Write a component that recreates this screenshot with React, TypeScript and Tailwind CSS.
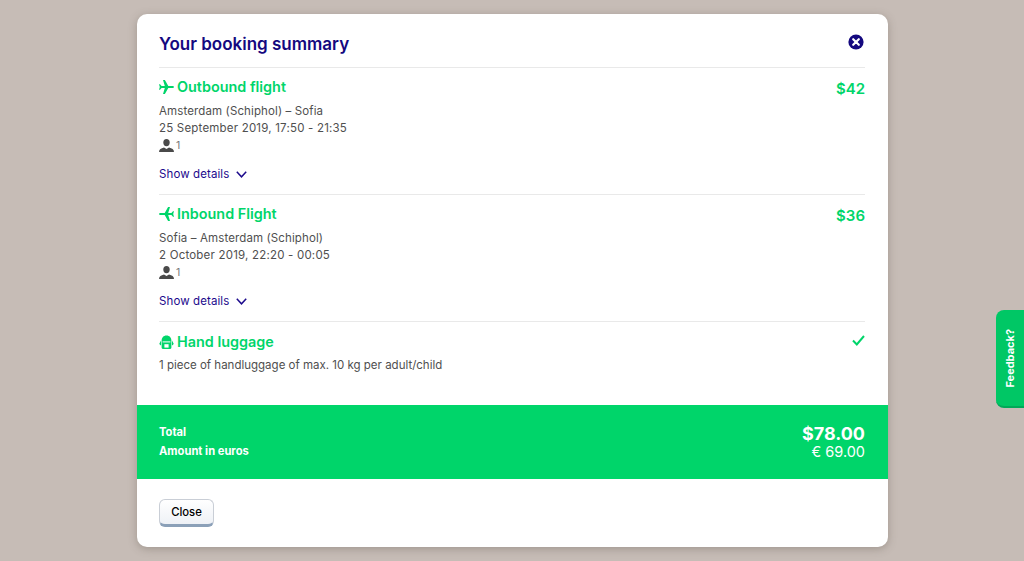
import React from "react";

const font = { fontFamily: '"Inter", "Liberation Sans", sans-serif' };

function Plane({ flip }: { flip?: boolean }) {
  return (
    <svg width="15" height="14" viewBox="0 0 15 14" className={flip ? "-scale-x-100" : ""} fill="#00d56a">
      <path d="M0 4.2 L1 4.2 L2.6 6 L5.8 6 L4 0 L5.9 0 L9.3 6 L13 6 C14.2 6 15 6.4 15 7 C15 7.6 14.2 8 13 8 L9.3 8 L5.9 14 L4 14 L5.8 8 L2.6 8 L1 9.8 L0 9.8 L0.8 7 Z" />
    </svg>
  );
}

function Person() {
  return (
    <svg width="15" height="13" viewBox="0 0 15 13" fill="#4a4a4a">
      <ellipse cx="7.5" cy="3.6" rx="3.2" ry="3.6" />
      <path d="M0 13 C0 10.2 2 9.4 5 8.6 L7.5 10 L10 8.6 C13 9.4 15 10.2 15 13 Z" />
    </svg>
  );
}

function Chevron() {
  return (
    <svg width="11" height="7" viewBox="0 0 11 7" fill="none" stroke="#1c0a8c" strokeWidth="1.5">
      <path d="M0.8 0.8 L5.5 5.8 L10.2 0.8" />
    </svg>
  );
}

function Luggage() {
  return (
    <svg width="15" height="15" viewBox="0 0 15 15" fill="#00d56a">
      <path d="M7.5 0.6 C10.6 0.6 12.3 2.8 12.4 5.8 L12.4 12.6 C12.4 13.4 11.9 14 11.2 14 L3.8 14 C3.1 14 2.6 13.4 2.6 12.6 L2.6 5.8 C2.7 2.8 4.4 0.6 7.5 0.6 Z" />
      <path d="M2 5.4 L0.3 8.8 L1.4 10.6 L2 9.8 Z M13 5.4 L14.7 8.8 L13.6 10.6 L13 9.8 Z" />
      <rect x="3.6" y="6.4" width="7.8" height="1" fill="#fff" />
      <rect x="5.4" y="9.2" width="4.2" height="3.4" fill="#fff" />
    </svg>
  );
}

function Flight({ title, route, date, price, flip }: { title: string; route: string; date: string; price: string; flip?: boolean }) {
  return (
    <section className="h-[127px] border-b border-[#e9e9e9] pt-[9px]">
      <div className="flex justify-between items-start">
        <div className="flex items-center gap-[3px] h-[20px]">
          <Plane flip={flip} />
          <span className="text-[14.4px] font-semibold text-[#00d56a]">{title}</span>
        </div>
        <span className="mt-[1px] text-[15px] font-semibold text-[#00d56a] leading-[22px]">{price}</span>
      </div>
      <div className="mt-[3px] text-[11.5px] leading-[17px] text-[#4f4f4f]">
        <div className="tracking-[0.12px]">{route}</div>
        <div className="tracking-[0.2px]">{date}</div>
        <div className="flex items-center gap-[2px] h-[17px]">
          <Person />
          <span className="text-[10.5px] text-[#777]">1</span>
        </div>
      </div>
      <div className="mt-[12px] flex items-center gap-[7px] text-[11.5px] leading-[17px] text-[#1c0a8c]">
        <span className="tracking-[0.1px]">Show details</span>
        <Chevron />
      </div>
    </section>
  );
}

export default function App() {
  return (
    <div style={font} className="w-[1024px] h-[561px] bg-[#c6bcb6] overflow-hidden relative pt-[14px] pl-[137px]">
      <main className="w-[751px] h-[533px] bg-white rounded-[10px] shadow-[0_2px_8px_rgba(90,80,70,0.35)] overflow-hidden flex flex-col">
        <div className="pl-[22px] pr-[23px] flex-1">
          <header className="h-[54px] border-b border-[#e9e9e9] flex items-start justify-between pt-[19px]">
            <h1 className="text-[17px] leading-[22px] font-semibold text-[#14087f]">Your booking summary</h1>
            <svg width="16" height="16" viewBox="0 0 16 16" className="mt-[1px] mr-[1px]">
              <circle cx="8" cy="8" r="7.6" fill="#14087f" />
              <path d="M5.2 5.2 L10.8 10.8 M10.8 5.2 L5.2 10.8" stroke="#fff" strokeWidth="2.2" strokeLinecap="round" />
            </svg>
          </header>
          <Flight title="Outbound flight" route="Amsterdam (Schiphol) – Sofia" date="25 September 2019, 17:50 - 21:35" price="$42" />
          <Flight flip title="Inbound Flight" route="Sofia – Amsterdam (Schiphol)" date="2 October 2019, 22:20 - 00:05" price="$36" />
          <section className="pt-[10px]">
            <div className="flex justify-between items-start">
              <div className="flex items-center gap-[3px] h-[20px]">
                <Luggage />
                <span className="text-[14.4px] font-semibold text-[#00d56a]">Hand luggage</span>
              </div>
              <svg width="13" height="11" viewBox="0 0 13 11" fill="none" stroke="#00d56a" strokeWidth="2" className="mt-[3px]">
                <path d="M1 5.5 L4.8 9.4 L12 1" />
              </svg>
            </div>
            <p className="mt-[5px] text-[11.5px] leading-[17px] text-[#4f4f4f]">1 piece of handluggage of max. 10 kg per adult/child</p>
          </section>
        </div>
        <div className="h-[74px] bg-[#00d56a] pl-[22px] pr-[23px] flex justify-between items-start text-white">
          <div className="pt-[18px] text-[11.2px] leading-[19px] font-bold">
            <div>Total</div>
            <div>Amount in euros</div>
          </div>
          <div className="pt-[18px] text-right">
            <div className="text-[18px] leading-[22px] font-bold">$78.00</div>
            <div className="-mt-[2px] text-[14.5px] leading-[17px]">€ 69.00</div>
          </div>
        </div>
        <div className="h-[68px] px-[22px] pt-[20px]">
          <button className="block w-[55px] h-[28px] rounded-[6px] border border-[#c9ced6] border-b-[3px] border-b-[#8ba0b8] bg-gradient-to-b from-white to-[#eef1f6] text-[11.3px] font-medium text-black">
            Close
          </button>
        </div>
      </main>
      <aside className="absolute left-[996px] top-[310px] w-[28px] h-[98px] bg-[#00c765] rounded-l-[8px] border-b-2 border-[#00a858] flex items-center justify-center">
        <span className="text-white text-[11px] font-bold -rotate-90 whitespace-nowrap">Feedback?</span>
      </aside>
    </div>
  );
}
